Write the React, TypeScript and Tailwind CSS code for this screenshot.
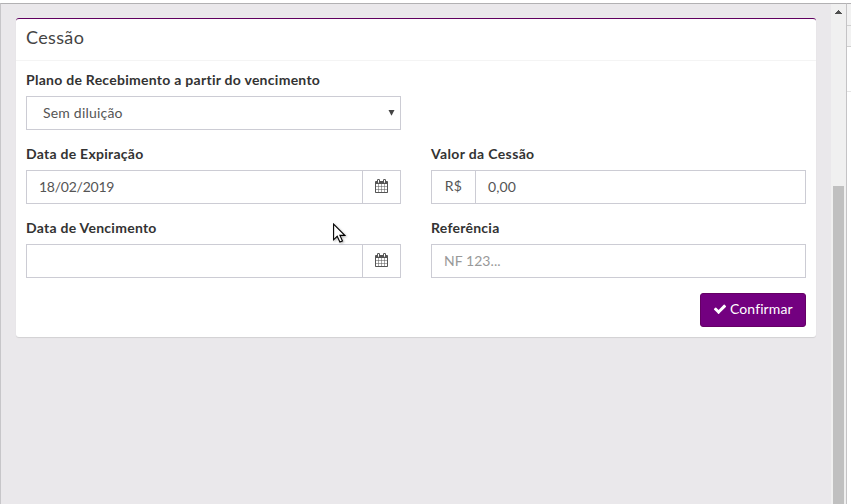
import type { ReactNode } from "react";

function CalendarIcon() {
  return (
    <svg viewBox="64 0 1664 1792" className="mb-[2px] h-[14px] w-[13px] fill-[#555]" aria-hidden="true">
      <path d="M192 1664h288v-288h-288v288zm352 0h320v-288h-320v288zm-352-352h288v-320h-288v320zm352 0h320v-320h-320v320zm-352-384h288v-288h-288v288zm736 736h320v-288h-320v288zm-384-736h320v-288h-320v288zm768 736h288v-288h-288v288zm-384-352h320v-320h-320v320zm-352-864v-288q0-13-9.5-22.5t-22.5-9.5h-64q-13 0-22.5 9.5t-9.5 22.5v288q0 13 9.5 22.5t22.5 9.5h64q13 0 22.5-9.5t9.5-22.5zm736 864h288v-320h-288v320zm-384-384h320v-288h-320v288zm384 0h288v-288h-288v288zm32-480v-288q0-13-9.5-22.5t-22.5-9.5h-64q-13 0-22.5 9.5t-9.5 22.5v288q0 13 9.5 22.5t22.5 9.5h64q13 0 22.5-9.5t9.5-22.5zm384-64v1280q0 52-38 90t-90 38h-1408q-52 0-90-38t-38-90v-1280q0-52 38-90t90-38h128v-96q0-66 47-113t113-47h64q66 0 113 47t47 113v96h384v-96q0-66 47-113t113-47h64q66 0 113 47t47 113v96h128q52 0 90 38t38 90z" />
    </svg>
  );
}

function CheckIcon() {
  return (
    <svg viewBox="0 0 1792 1792" className="h-[14px] w-[14px] fill-white" aria-hidden="true">
      <path d="M1671 566q0 40-28 68l-724 724-136 136q-28 28-68 28t-68-28l-136-136-362-362q-28-28-28-68t28-68l136-136q28-28 68-28t68 28l294 295 656-657q28-28 68-28t68 28l136 136q28 28 28 68z" />
    </svg>
  );
}

function Field({ label, spacing, children }: { label: string; spacing: string; children: ReactNode }) {
  return (
    <div className="w-[375px]">
      <div className={`mb-[7px] h-[18px] text-sm leading-[18px] font-bold whitespace-nowrap text-[#333] ${spacing}`}>{label}</div>
      <div className="flex h-[34px] border border-[#ccccd4] bg-white text-sm leading-8 text-[#555]">{children}</div>
    </div>
  );
}

function DateInput({ value }: { value: string }) {
  return (
    <>
      <div className="flex-1 pl-3 tracking-[-0.25px]">{value}</div>
      <div className="flex w-[38px] items-center justify-center border-l border-[#ccccd4]">
        <CalendarIcon />
      </div>
    </>
  );
}

export default function App() {
  return (
    <div className="relative flex h-[504px] w-[851px] overflow-hidden bg-white pt-[3px] font-['Lato','Open_Sans',sans-serif]">
      <main className="w-[831px] border-t border-l border-t-[#b2b1b3] border-l-[#c7c6c9] bg-[#eae8eb] pt-[14px] pl-[15px]">
        <section className="h-[319px] w-[800px] rounded-[3px] border-t border-[#600060] bg-white shadow-[0_1px_1px_rgba(0,0,0,0.1)]">
          <h1 className="h-[42px] border-b border-[#f4f4f4] pt-[8px] pl-[10px] text-[18px] leading-5 font-normal tracking-[0.35px] text-[#444]">Cessão</h1>
          <div className="flex flex-col gap-[15px] p-[10px]">
            <Field label="Plano de Recebimento a partir do vencimento" spacing="tracking-[0.27px]">
              <div className="flex-1 pl-4 tracking-[0.2px]">Sem diluição</div>
              <svg viewBox="0 0 7 6" className="mt-[13px] mr-[5px] h-[6px] w-[7px] fill-[#444]" aria-hidden="true">
                <path d="M.5 0h6L3.5 5.7z" />
              </svg>
            </Field>
            <div className="flex gap-[30px]">
              <Field label="Data de Expiração" spacing="tracking-[0.26px]">
                <DateInput value="18/02/2019" />
              </Field>
              <Field label="Valor da Cessão" spacing="tracking-[0.36px]">
                <div className="w-[44px] border-r border-[#ccccd4] text-center leading-[30px] tracking-[0.3px]">R$</div>
                <div className="pl-3 tracking-[0.1px]">0,00</div>
              </Field>
            </div>
            <div className="flex gap-[30px]">
              <Field label="Data de Vencimento" spacing="tracking-[0.26px]">
                <DateInput value="" />
              </Field>
              <Field label="Referência" spacing="tracking-[0.25px]">
                <div className="pl-3 tracking-[0.05px] text-[#999]">NF 123...</div>
              </Field>
            </div>
            <button className="flex h-[34px] w-[106px] items-center gap-[3px] self-end rounded-[3px] border border-[#650065] bg-[#730080] pb-[2px] pl-3 text-sm tracking-[0.1px] text-white">
              <CheckIcon />
              <span>Confirmar</span>
            </button>
          </div>
        </section>
      </main>
      <div className="w-[16px] border-t border-r border-t-[#b2b1b3] border-r-[#c4c3c5] bg-[#f0f0f0]">
        <svg viewBox="0 0 7 4" shapeRendering="crispEdges" className="mt-[6px] ml-[4px] h-[4px] w-[7px] fill-[#505050]" aria-hidden="true">
          <path d="M3 0h1v1h1v1h1v1h1v1H0V3h1V2h1V1h1z" />
        </svg>
        <div className="mt-[172px] ml-[2px] h-[318px] w-[11px] bg-[#c0c0c0]" />
      </div>
      <div className="w-1 border-t border-[#b2b1b3]">
        <div className="h-[22px] border-b border-[#d0d0d0] bg-[#f2f2f2]" />
        <div className="h-[21px] border-b border-[#d0d0d0] bg-[#f2f2f2]" />
        <div className="h-[45px] border-b border-[#e6e6e6]" />
      </div>
      <svg viewBox="0 0 13 20" className="absolute top-[223px] left-[333px] h-5 w-[13px] drop-shadow-[1px_1px_1px_rgba(0,0,0,0.3)]" aria-hidden="true">
        <path d="M.6 1.1v15.7l3.6-3.5 2.7 5.8 2.6-1.2-2.6-5.5h4.9z" fill="white" stroke="black" strokeWidth="1.1" />
      </svg>
    </div>
  );
}
